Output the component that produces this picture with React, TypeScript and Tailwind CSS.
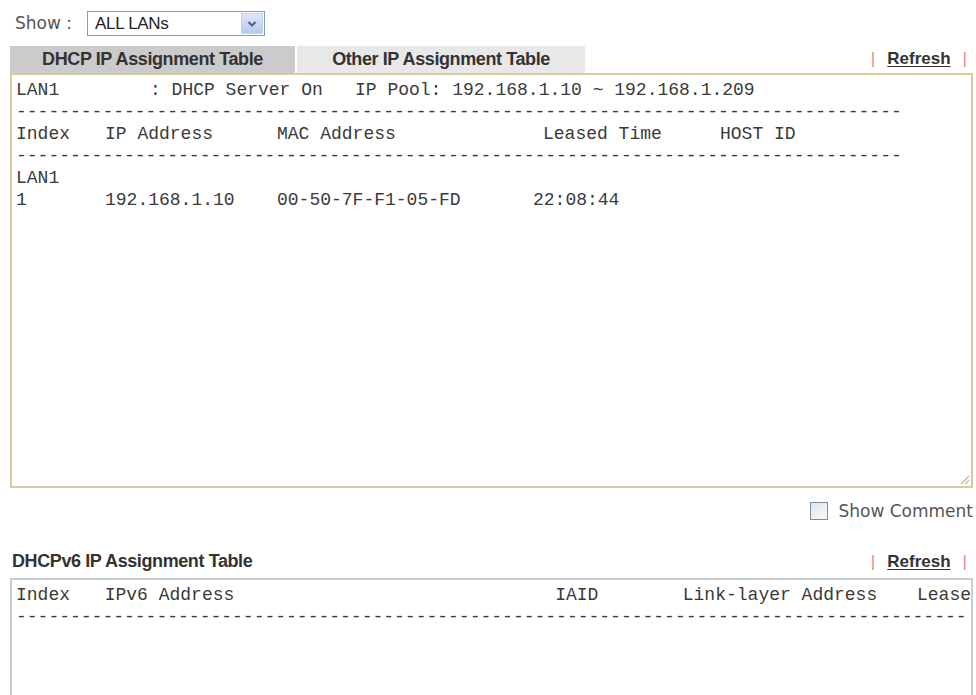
import React from "react";

const mono = "font-['Liberation_Mono','Courier_New',monospace] text-[18px] leading-[22px] text-[#3a3a3a] whitespace-pre";
const sans = "font-['DejaVu_Sans',Verdana,sans-serif]";
const arial = "font-['Liberation_Sans',Arial,sans-serif]";

function RefreshLink() {
  return (
    <div className={`flex items-center gap-[12px] ${arial} text-[17px]`}>
      <span className="text-[#e28a8a]">|</span>
      <span className="font-bold text-[#333] underline underline-offset-2">Refresh</span>
      <span className="text-[#e28a8a]">|</span>
    </div>
  );
}

function Dashes({ count }: { count: number }) {
  return <div>{"-".repeat(count)}</div>;
}

export default function App() {
  return (
    <div className="w-[976px] h-[695px] overflow-hidden bg-white pl-[10px] pr-[3px] pt-[11px]">
      {/* show filter */}
      <div className="flex items-center">
        <span className={`${sans} text-[17px] text-[#555] pl-[5px] w-[77px]`}>Show :</span>
        <div className="w-[178px] h-[25px] border border-[#7f9db9] bg-white flex items-center justify-between pl-[7px] pr-[1px]">
          <span className={`${arial} text-[17px] text-[#222] tracking-[-0.3px]`}>ALL LANs</span>
          <div className="w-[22px] h-[21px] bg-gradient-to-b from-[#dfe8fb] to-[#b6c9ef] border border-[#c2d2f0] flex items-center justify-center">
            <svg width="10" height="8" viewBox="0 0 10 8">
              <path d="M1.5 2 L5 5.5 L8.5 2" fill="none" stroke="#4d6185" strokeWidth="2" />
            </svg>
          </div>
        </div>
      </div>

      {/* tabs */}
      <div className="mt-[9px] flex items-center justify-between pr-[6px]">
        <div className={`flex h-[27px] ${arial} text-[18px] font-bold text-[#333] tracking-[-0.4px]`}>
          <div className="w-[285px] bg-[#cbcbcb] flex items-center justify-center">DHCP IP Assignment Table</div>
          <div className="w-[288px] ml-[2px] bg-[#e8e8e8] flex items-center justify-center">Other IP Assignment Table</div>
        </div>
        <RefreshLink />
      </div>

      {/* DHCP table */}
      <div className={`relative h-[415px] border-2 border-[#d8cc9f] pt-[4px] pl-[4px] ${mono}`}>
        <div className="flex">
          <span className="w-[134px]">LAN1</span>
          <span className="w-[205px]">: DHCP Server On</span>
          <span>IP Pool: 192.168.1.10 ~ 192.168.1.209</span>
        </div>
        <Dashes count={82} />
        <div className="flex">
          <span className="w-[89px]">Index</span>
          <span className="w-[172px]">IP Address</span>
          <span className="w-[266px]">MAC Address</span>
          <span className="w-[177px]">Leased Time</span>
          <span>HOST ID</span>
        </div>
        <Dashes count={82} />
        <div>LAN1</div>
        <div className="flex">
          <span className="w-[89px]">1</span>
          <span className="w-[172px]">192.168.1.10</span>
          <span className="w-[256px]">00-50-7F-F1-05-FD</span>
          <span>22:08:44</span>
        </div>
        <svg className="absolute right-[1px] bottom-[1px]" width="12" height="12" viewBox="0 0 12 12">
          <path d="M11 3 L3 11 M11 7 L7 11" stroke="#b8b8b8" strokeWidth="1.2" />
        </svg>
      </div>

      {/* show comment */}
      <div className="mt-[11px] flex items-center justify-end">
        <div className="w-[18px] h-[18px] border border-[#7d8ea0] bg-gradient-to-br from-[#dde5ee] to-[#f7f9fb]" />
        <span className={`${sans} text-[17px] text-[#555] ml-[10px]`}>Show Comment</span>
      </div>

      {/* DHCPv6 */}
      <div className="mt-[24px] flex items-center justify-between pr-[6px]">
        <span className={`${arial} text-[18px] font-bold text-[#333] tracking-[-0.4px] pl-[2px]`}>DHCPv6 IP Assignment Table</span>
        <RefreshLink />
      </div>
      <div className={`mt-[3px] h-[140px] border-2 border-[#c5cdd5] pt-[4px] pl-[4px] ${mono}`}>
        <div className="flex">
          <span className="w-[89px]">Index</span>
          <span className="w-[452px]">IPv6 Address</span>
          <span className="w-[128px]">IAID</span>
          <span className="w-[235px]">Link-layer Address</span>
          <span>Lease</span>
        </div>
        <Dashes count={88} />
      </div>
    </div>
  );
}
